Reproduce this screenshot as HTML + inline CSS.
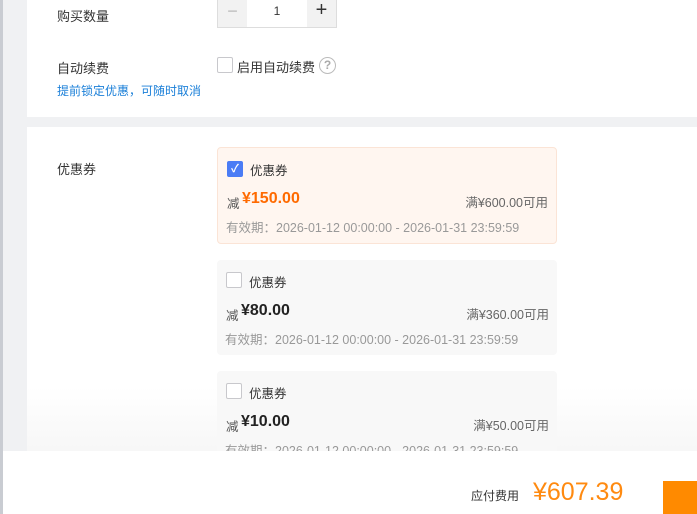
<!DOCTYPE html>
<html><head><meta charset="utf-8"><style>
*{margin:0;padding:0;box-sizing:border-box}
body{width:697px;height:514px;overflow:hidden;position:relative;background:#f0f1f3;font-family:"Liberation Sans","Noto Sans CJK SC",sans-serif;color:#333}
.abs{position:absolute;white-space:nowrap}
.strip{left:0;top:0;width:3px;height:514px;background:#c9ccd2}
.c1{left:27px;top:0;width:670px;height:117px;background:#fff}
.c2{left:27px;top:127px;width:670px;height:330px;background:linear-gradient(#fff 0,#fff 260px,#f6f6f6 330px)}
.lbl{font-size:13px;color:#333}
.cb{width:16px;height:16px;border:1px solid #c8c8cc;border-radius:2px;background:#fff}
.coupon{left:217px;width:340px;border-radius:4px}
.t{font-size:12.5px}
.num{font-size:12.5px;color:#999}
</style></head><body>
<div class="abs strip"></div>
<div class="abs c1"></div>
<div class="abs c2"></div>

<div class="abs lbl" style="left:57px;top:6px">购买数量</div>
<div class="abs" style="left:217px;top:-2px;width:120px;height:30px;border:1px solid #ddd;background:#fff">
 <div class="abs" style="left:0;top:0;width:29px;height:28px;background:#f2f2f2;color:#bbb;font-size:18px;text-align:center;line-height:24px">−</div>
 <div class="abs" style="left:29px;top:0;width:60px;height:28px;text-align:center;font-size:12px;line-height:24px;color:#333">1</div>
 <div class="abs" style="right:0;top:0;width:29px;height:28px;background:#f2f2f2;color:#333;font-size:20px;text-align:center;line-height:22px">+</div>
</div>

<div class="abs lbl" style="left:57px;top:58px">自动续费</div>
<div class="abs" style="left:57px;top:82px;font-size:12px;color:#1a7fd8">提前锁定优惠，可随时取消</div>
<div class="abs cb" style="left:217px;top:57px"></div>
<div class="abs lbl" style="left:237px;top:57px">启用自动续费</div>
<div class="abs" style="left:319px;top:57px;width:17px;height:17px;border:1.5px solid #bbb;border-radius:50%;color:#aaa;font-size:12px;text-align:center;line-height:14px;font-weight:bold">?</div>

<div class="abs lbl" style="left:57px;top:159px">优惠券</div>

<div class="abs coupon" style="top:147px;height:97px;background:#fff6f0;border:1px solid #fbe4d6">
 <div class="abs" style="left:9px;top:13px;width:16px;height:16px;background:#4b7cf5;border-radius:2px;color:#fff;font-size:11px;text-align:center;line-height:16px;font-weight:bold">✓</div>
 <div class="abs t" style="left:32px;top:12px">优惠券</div>
 <div class="abs t" style="left:9px;top:45px;color:#555">减</div>
 <div class="abs" style="left:24px;top:42px;font-size:16px;font-weight:bold;color:#ff6a00">¥150.00</div>
 <div class="abs t" style="right:8px;top:44px;color:#666">满¥600.00可用</div>
 <div class="abs num" style="left:8px;top:69px">有效期：2026-01-12 00:00:00 - 2026-01-31 23:59:59</div>
</div>

<div class="abs coupon" style="top:260px;height:95px;background:#f8f8f8">
 <div class="abs cb" style="left:9px;top:12px"></div>
 <div class="abs t" style="left:32px;top:12px">优惠券</div>
 <div class="abs t" style="left:9px;top:45px;color:#555">减</div>
 <div class="abs" style="left:24px;top:42px;font-size:16px;font-weight:bold;color:#222">¥80.00</div>
 <div class="abs t" style="right:8px;top:44px;color:#666">满¥360.00可用</div>
 <div class="abs num" style="left:8px;top:69px">有效期：2026-01-12 00:00:00 - 2026-01-31 23:59:59</div>
</div>

<div class="abs coupon" style="top:371px;height:90px;background:#f8f8f8">
 <div class="abs cb" style="left:9px;top:12px"></div>
 <div class="abs t" style="left:32px;top:12px">优惠券</div>
 <div class="abs t" style="left:9px;top:45px;color:#555">减</div>
 <div class="abs" style="left:24px;top:42px;font-size:16px;font-weight:bold;color:#222">¥10.00</div>
 <div class="abs t" style="right:8px;top:44px;color:#666">满¥50.00可用</div>
 <div class="abs num" style="left:8px;top:69px">有效期：2026-01-12 00:00:00 - 2026-01-31 23:59:59</div>
</div>

<div class="abs" style="left:3px;top:451px;width:694px;height:63px;background:#fff"></div>
<div class="abs" style="left:471px;top:487px;font-size:12px;color:#333">应付费用</div>
<div class="abs" style="left:533px;top:478px;font-size:25px;color:#ff8a10">¥607.39</div>
<div class="abs" style="left:663px;top:481px;width:34px;height:33px;background:#ff8a00"></div>
</body></html>
